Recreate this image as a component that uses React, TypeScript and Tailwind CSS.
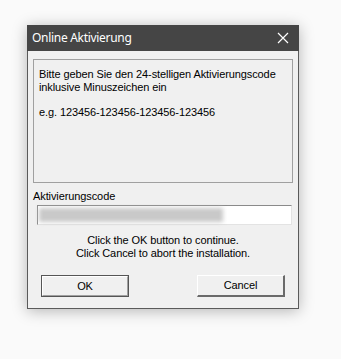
export default function App() {
	return (
		<div className="w-[341px] h-[359px] bg-[#fafafa] pt-[25px] pl-[27px]">
			<div className="w-[272px] h-[284px] bg-[#f0f0f0] border border-[#5a5a5a] border-t-0 shadow-[0_2px_14px_rgba(0,0,0,0.28)] flex flex-col">
				<div className="h-[26px] bg-[#454545] flex items-center justify-between pl-[5px] pr-[10px] -mx-px">
					<span className="text-white text-[12px] tracking-[-0.3px] font-['Noto_Sans',sans-serif]">
						Online Aktivierung
					</span>
					<svg width="12" height="12" viewBox="0 0 12 12">
						<path d="M1 1 L11 11 M11 1 L1 11" stroke="#ffffff" strokeWidth="1.2" />
					</svg>
				</div>
				<div className="flex flex-col px-[5px] pt-[8px] font-['Liberation_Sans',Arial,sans-serif] text-[11px] tracking-[-0.1px] text-black leading-[13px]">
					<div className="h-[124px] border border-[#a0a0a0] pl-[5px] pt-[8px]">
						<p>Bitte geben Sie den 24-stelligen Aktivierungscode</p>
						<p>inklusive Minuszeichen ein</p>
						<p className="mt-[12px]">e.g. 123456-123456-123456-123456</p>
					</div>
					<label className="mt-[6px] leading-[14px]">Aktivierungscode</label>
					<div className="mt-[2px] ml-[4px] w-[255px] h-[20px] bg-white border-t border-l border-[#8a8a8a] border-r border-b border-r-[#e3e3e3] border-b-[#e3e3e3] flex items-center">
						<div className="h-[14px] w-[184px] ml-[1px] bg-[#c9c9c9] blur-[2px]" />
					</div>
					<div className="mt-[9px] text-center leading-[13px]">
						<p>Click the OK button to continue.</p>
						<p>Click Cancel to abort the installation.</p>
					</div>
					<div className="mt-[15px] flex justify-between px-[8px]">
						<button className="w-[88px] h-[22px] border border-[#555] bg-[#f0f0f0] flex items-center justify-center">
							<span className="w-full h-full flex items-center justify-center border-t border-l border-white border-r border-b border-r-[#a0a0a0] border-b-[#a0a0a0]">
								OK
							</span>
						</button>
						<button className="w-[88px] h-[22px] bg-[#f0f0f0] border-t border-l border-white border-r-2 border-b-2 border-r-[#6a6a6a] border-b-[#6a6a6a] flex items-center justify-center">
							Cancel
						</button>
					</div>
				</div>
			</div>
		</div>
	);
}
